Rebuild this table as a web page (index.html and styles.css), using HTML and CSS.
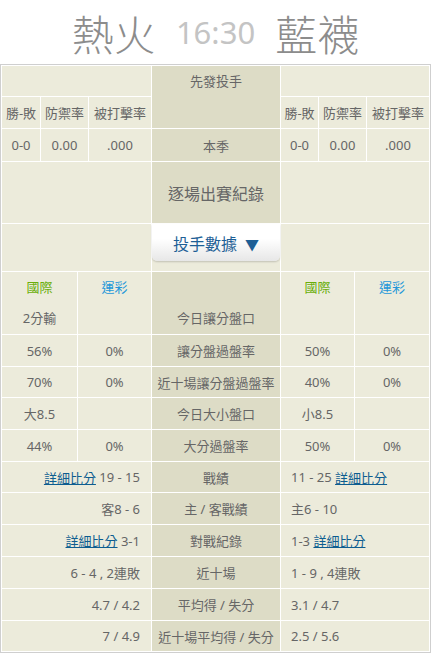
FILE: index.html
```html
<!DOCTYPE html>
<html lang="zh-Hant">
<head>
    <meta charset="UTF-8">
    <meta name="viewport" content="width=device-width, initial-scale=1.0">
    <title>熱火 vs 藍襪</title>
    <link rel="stylesheet" href="styles.css">
</head>
<body>
    <header class="match">
        <span class="team">熱火</span>
        <span class="time">16:30</span>
        <span class="team">藍襪</span>
    </header>

    <div class="board">
        <!-- 先發投手 -->
        <div class="cell"></div>
        <div class="cell mid pitcher">先發投手</div>
        <div class="cell"></div>

        <div class="split three-l">
            <span>勝-敗</span><span>防禦率</span><span>被打擊率</span>
        </div>
        <div class="split three-r">
            <span>勝-敗</span><span>防禦率</span><span>被打擊率</span>
        </div>

        <div class="split three-l">
            <span>0-0</span><span>0.00</span><span>.000</span>
        </div>
        <div class="cell mid">本季</div>
        <div class="split three-r">
            <span>0-0</span><span>0.00</span><span>.000</span>
        </div>

        <div class="cell"></div>
        <div class="cell mid big">逐場出賽紀錄</div>
        <div class="cell"></div>

        <div class="cell"></div>
        <div class="cell btn-cell">
            <button class="tab-btn">投手數據<span class="arrow">▼</span></button>
        </div>
        <div class="cell"></div>

        <!-- 盤口 -->
        <div class="split two-l">
            <div class="stack"><span class="intl">國際</span><span>2分輸</span></div>
            <div class="stack"><span class="lottery">運彩</span><span></span></div>
        </div>
        <div class="cell mid stack-mid"><span></span><span>今日讓分盤口</span></div>
        <div class="split two-r">
            <div class="stack"><span class="intl">國際</span><span></span></div>
            <div class="stack"><span class="lottery">運彩</span><span></span></div>
        </div>

        <div class="split two-l"><span>56%</span><span>0%</span></div>
        <div class="cell mid">讓分盤過盤率</div>
        <div class="split two-r"><span>50%</span><span>0%</span></div>

        <div class="split two-l"><span>70%</span><span>0%</span></div>
        <div class="cell mid">近十場讓分盤過盤率</div>
        <div class="split two-r"><span>40%</span><span>0%</span></div>

        <div class="split two-l"><span>大8.5</span><span></span></div>
        <div class="cell mid">今日大小盤口</div>
        <div class="split two-r"><span>小8.5</span><span></span></div>

        <div class="split two-l"><span>44%</span><span>0%</span></div>
        <div class="cell mid">大分過盤率</div>
        <div class="split two-r"><span>50%</span><span>0%</span></div>

        <!-- 戰績 -->
        <div class="cell home"><a href="#">詳細比分</a>&nbsp;19 - 15</div>
        <div class="cell mid">戰績</div>
        <div class="cell away">11 - 25&nbsp;<a href="#">詳細比分</a></div>

        <div class="cell home">客8 - 6</div>
        <div class="cell mid">主 / 客戰績</div>
        <div class="cell away">主6 - 10</div>

        <div class="cell home"><a href="#">詳細比分</a>&nbsp;3-1</div>
        <div class="cell mid">對戰紀錄</div>
        <div class="cell away">1-3&nbsp;<a href="#">詳細比分</a></div>

        <div class="cell home">6 - 4 , 2連敗</div>
        <div class="cell mid">近十場</div>
        <div class="cell away">1 - 9 , 4連敗</div>

        <div class="cell home">4.7 / 4.2</div>
        <div class="cell mid">平均得 / 失分</div>
        <div class="cell away">3.1 / 4.7</div>

        <div class="cell home">7 / 4.9</div>
        <div class="cell mid">近十場平均得 / 失分</div>
        <div class="cell away">2.5 / 5.6</div>
    </div>
</body>
</html>
```

FILE: styles.css
```css
body {
    margin: 0;
    font-family: "Noto Sans", "Noto Sans CJK TC", sans-serif;
    color: #666;
    background-color: #fff;
}

.match {
    height: 64px;
    display: flex;
    align-items: center;
    justify-content: center;
    gap: 20px;
    font-family: "Noto Sans CJK TC", sans-serif;
}

.match .team {
    font-size: 42px;
    color: #8c8c8c;
    font-weight: 300;
}

.match .time {
    font-family: "Noto Sans", sans-serif;
    font-size: 31px;
    color: #c4c4c4;
}

.board {
    display: grid;
    grid-template-columns: 149px 128px 148px;
    grid-template-rows: 30px 31px 32px 61px 47px 62px 31px 30px 31px 31px 30px 31px 31px 31px 31px 30px;
    gap: 1px;
    padding: 1px;
    border: 1px solid #cfcfcf;
    background-color: #fff;
    font-size: 13px;
}

.cell,
.split > span,
.stack {
    background-color: #ecebdb;
}

.cell,
.split > span {
    display: flex;
    align-items: center;
    justify-content: center;
}

.mid {
    background-color: #dddcc6;
}

.pitcher {
    grid-row: span 2;
    align-items: flex-start;
    line-height: 30px;
}

.big {
    font-size: 16px;
}

.split {
    display: grid;
    gap: 1px;
}

.three-l {
    grid-template-columns: 38px 47px 62px;
}

.three-r {
    grid-template-columns: 37px 47px 62px;
}

.two-l {
    grid-template-columns: 75px 73px;
}

.two-r {
    grid-template-columns: 73px 74px;
}

.stack,
.stack-mid {
    display: flex;
    flex-direction: column;
}

.stack span,
.stack-mid span {
    height: 31px;
    line-height: 31px;
    text-align: center;
}

.intl {
    color: #6aae0a;
}

.lottery {
    color: #2397d9;
}

.btn-cell {
    align-items: flex-start;
}

.tab-btn {
    width: 100%;
    height: 37px;
    border: none;
    border-radius: 0 0 5px 5px;
    background: linear-gradient(#fff 40%, #e7e7e7);
    box-shadow: 0 1px 2px rgba(0, 0, 0, 0.18);
    color: #1d5f96;
    font-family: "Noto Sans CJK TC", sans-serif;
    font-size: 16px;
    cursor: pointer;
}

.tab-btn .arrow {
    margin-left: 8px;
    font-size: 14px;
}

.home {
    justify-content: flex-end;
    padding-right: 11px;
}

.away {
    justify-content: flex-start;
    padding-left: 10px;
}

.board a {
    color: #0d5d90;
}
```
